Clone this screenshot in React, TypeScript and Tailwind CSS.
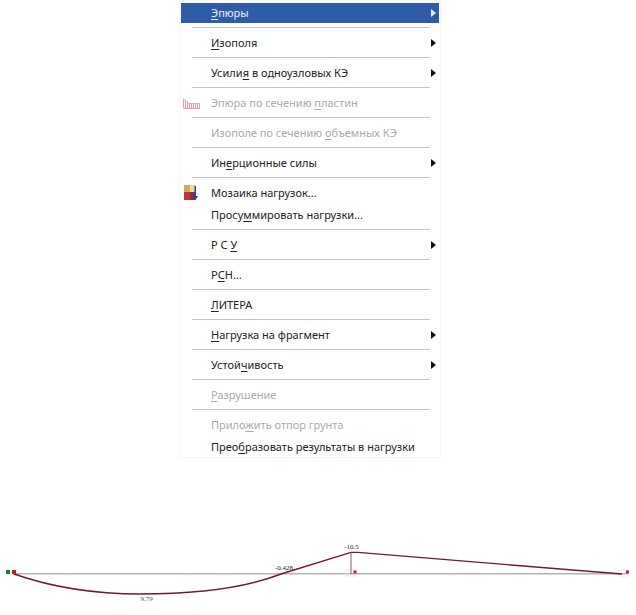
const rows = [
  { a: "", u: "Э", b: "пюры", active: true, arrow: true },
  "sep",
  { a: "", u: "И", b: "зополя", arrow: true },
  "sep",
  { a: "Усили", u: "я", b: " в одноузловых КЭ", arrow: true },
  "sep",
  { a: "Эпюра по сечению ", u: "п", b: "ластин", off: true, icon: "chart" },
  "sep",
  { a: "Изополе по сечению ", u: "о", b: "бъемных КЭ", off: true },
  "sep",
  { a: "Ин", u: "е", b: "рционные силы", arrow: true },
  "sep",
  { a: "Мозаика нагрузок...", u: "", b: "", icon: "mosaic" },
  { a: "Просу", u: "м", b: "мировать нагрузки..." },
  "sep",
  { a: "Р С ", u: "У", b: "", arrow: true },
  "sep",
  { a: "Р", u: "С", b: "Н..." },
  "sep",
  { a: "", u: "Л", b: "ИТЕРА" },
  "sep",
  { a: "", u: "Н", b: "агрузка на фрагмент", arrow: true },
  "sep",
  { a: "Устой", u: "ч", b: "ивость", arrow: true },
  "sep",
  { a: "", u: "Р", b: "азрушение", off: true },
  "sep",
  { a: "Прило", u: "ж", b: "ить отпор грунта", off: true },
  { a: "Прео", u: "б", b: "разовать результаты в нагрузки" },
] as const;

function ChartIcon() {
  return (
    <svg width="17" height="11" viewBox="0 0 17 11">
      <path d="M0.5 0.5 L6 5.5 L16.5 5.5 L16.5 10.5 L0.5 10.5 Z" fill="#f8eef0" />
      <path d="M0.5 0.5 L6 5.5 L16.5 5.5" fill="none" stroke="#e0b8be" />
      <path
        d="M0.5 10.5 H16.5 M0.5 1 V10.5 M2.5 2.5 V10.5 M4.5 4 V10.5 M6.5 5.5 V10.5 M8.5 5.5 V10.5 M10.5 5.5 V10.5 M12.5 5.5 V10.5 M14.5 5.5 V10.5 M16.5 5.5 V10.5"
        stroke="#d8a8b0"
      />
    </svg>
  );
}

function MosaicIcon() {
  return (
    <svg width="15" height="16" viewBox="0 0 15 16">
      <rect x="0" y="0" width="6" height="7" fill="#d9a85a" />
      <rect x="6" y="0" width="5" height="7" fill="#efd9a0" />
      <rect x="0" y="7" width="6" height="8" fill="#b5363c" />
      <rect x="6" y="7" width="5" height="8" fill="#8e2f3f" />
      <path d="M10.5 1 H12 V11 H14 L11.2 15.5 L8.5 11 H10.5 Z" fill="#35408c" />
    </svg>
  );
}

function Row({ row }: { row: any }) {
  const color = row.active ? "bg-[#2f5ca8] text-[#e8eef8]" : row.off ? "text-[#aaaaaa]" : "text-[#222222]";
  return (
    <div className="h-[22px] py-px">
      <div className={`flex h-5 items-center ${color}`}>
        <div className="flex w-[30px] shrink-0 items-center justify-center pr-[9px]">
          {row.icon === "chart" && <ChartIcon />}
          {row.icon === "mosaic" && <MosaicIcon />}
        </div>
        <span className="flex-1 whitespace-pre">
          {row.a}
          {row.u && <span className="underline underline-offset-2">{row.u}</span>}
          {row.b}
        </span>
        {row.arrow && (
          <svg width="5" height="8" viewBox="0 0 5 8" className="mr-[3px]">
            <path d="M0 0 L5 4 L0 8 Z" fill={row.active ? "#e8eef8" : "#111111"} />
          </svg>
        )}
      </div>
    </div>
  );
}

function Diagram() {
  const label = "font-['Liberation_Serif',serif] text-[7px]";
  return (
    <svg width="636" height="75" viewBox="0 535 636 75" className="block">
      <line x1="8" y1="573.7" x2="628" y2="573.7" stroke="#b4b4b4" strokeWidth="1.4" />
      <rect x="6" y="570" width="10" height="6" fill="#f4f4ee" />
      <rect x="346" y="570" width="10" height="6" fill="none" stroke="#dddddd" strokeWidth="0.7" />
      <rect x="619" y="570" width="9" height="6" fill="none" stroke="#dddddd" strokeWidth="0.7" />
      <path
        d="M14 574 C60 590 105 594 140 594 C190 594 240 590 281 574 L351 552.4 L358 552.4 L622 574"
        fill="none"
        stroke="#701c28"
        strokeWidth="1.4"
      />
      <line x1="351" y1="552.4" x2="351" y2="574" stroke="#8b5a60" strokeWidth="1" />
      <rect x="6" y="570" width="4" height="4" fill="#1f7a3c" />
      <rect x="12" y="570" width="4" height="4" fill="#d0142c" />
      <rect x="353.5" y="570.5" width="3" height="3" fill="#d0142c" />
      <rect x="626" y="570.5" width="3" height="3" fill="#d0142c" />
      <text x="284" y="569.5" textAnchor="middle" fill="#222222" className={label}>-0.428</text>
      <text x="146.5" y="601" textAnchor="middle" fill="#555555" className={label}>9.79</text>
      <text x="351.5" y="548.5" textAnchor="middle" fill="#222222" className={label}>-10.5</text>
    </svg>
  );
}

export default function App() {
  return (
    <div className="h-[615px] w-[636px] overflow-hidden bg-white font-['Noto_Sans',sans-serif] text-[11px]">
      <div className="ml-[179px] h-[458px] w-[262px] border border-[#f6f6f6] px-px pt-px">
        {rows.map((row, i) =>
          row === "sep" ? (
            <div key={i} className="h-2 pb-[4px] pl-[11px] pr-[9px] pt-[3px]">
              <div className="h-px bg-[#c4c4c4]" />
            </div>
          ) : (
            <Row key={i} row={row} />
          )
        )}
      </div>
      <div className="mt-[77px]">
        <Diagram />
      </div>
    </div>
  );
}
